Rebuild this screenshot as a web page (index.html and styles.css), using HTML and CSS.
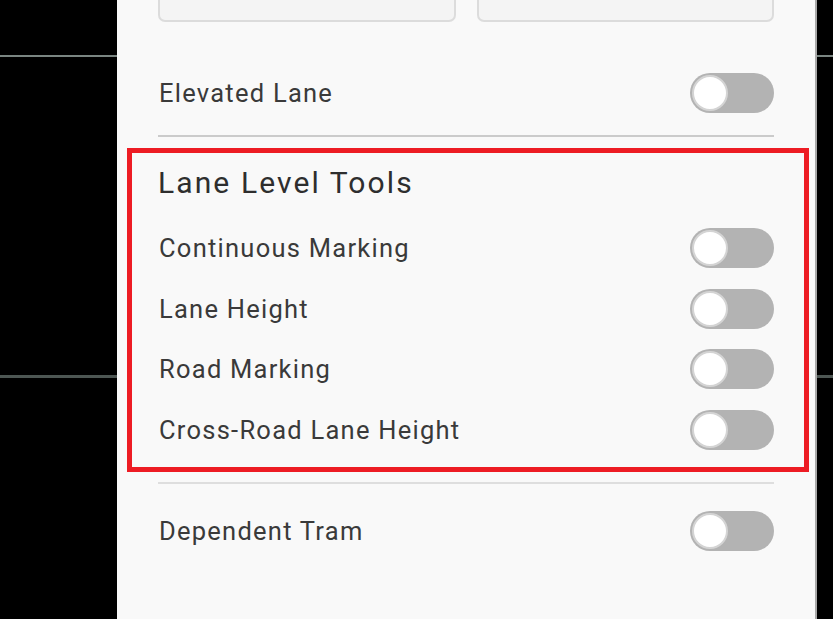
FILE: index.html
```html
<!DOCTYPE html>
<html lang="en">
<head>
<meta charset="utf-8">
<title>Lane Level Tools</title>
<link rel="stylesheet" href="styles.css">
</head>
<body>
<div class="screen">
  <div class="side side-left">
    <div class="grid-line line-top"></div>
    <div class="grid-line line-bottom"></div>
  </div>
  <div class="panel">
    <div class="input-row">
      <div class="input-box"></div>
      <div class="input-box"></div>
    </div>
    <div class="row row-elevated">
      <span class="label">Elevated Lane</span>
      <span class="toggle"><span class="knob"></span></span>
    </div>
    <div class="divider divider-top"></div>
    <section class="tools">
      <h2 class="tools-title">Lane Level Tools</h2>
      <div class="tools-list">
        <div class="row">
          <span class="label">Continuous Marking</span>
          <span class="toggle"><span class="knob"></span></span>
        </div>
        <div class="row">
          <span class="label">Lane Height</span>
          <span class="toggle"><span class="knob"></span></span>
        </div>
        <div class="row">
          <span class="label">Road Marking</span>
          <span class="toggle"><span class="knob"></span></span>
        </div>
        <div class="row">
          <span class="label">Cross-Road Lane Height</span>
          <span class="toggle"><span class="knob"></span></span>
        </div>
      </div>
    </section>
    <div class="divider divider-bottom"></div>
    <div class="row row-tram">
      <span class="label">Dependent Tram</span>
      <span class="toggle"><span class="knob"></span></span>
    </div>
  </div>
  <div class="side side-right">
    <div class="grid-line line-top"></div>
    <div class="grid-line line-bottom"></div>
  </div>
</div>
</body>
</html>
```

FILE: styles.css
```css
* {
  box-sizing: border-box;
}

html, body {
  margin: 0;
  padding: 0;
  background: #000;
}

body {
  width: 833px;
  height: 619px;
  overflow: hidden;
  font-family: Roboto, "Liberation Sans", sans-serif;
}

.screen {
  display: flex;
  width: 833px;
  height: 619px;
}

.side {
  background: #000;
  padding-top: 55px;
}

.side-left {
  width: 117px;
}

.side-right {
  width: 16px;
}

.grid-line {
  width: 100%;
}

.line-top {
  height: 2px;
  background: #7a8581;
}

.line-bottom {
  height: 3px;
  margin-top: 318px;
  background: #4d5653;
}

.panel {
  width: 700px;
  height: 619px;
  background: #f9f9f9;
  border-right: 2px solid #a9a9a9;
  padding: 0 41px;
}

.input-row {
  display: flex;
  gap: 21px;
  margin-top: -20px;
}

.input-box {
  flex: 1;
  height: 42px;
  background: #f4f4f4;
  border: 2px solid #dcdcdc;
  border-radius: 7px;
}

.row {
  display: flex;
  align-items: center;
  justify-content: space-between;
  height: 40px;
}

.row-elevated {
  margin-top: 51px;
}

.label {
  font-size: 25.5px;
  letter-spacing: 1.25px;
  color: #3a3a3a;
  padding-left: 1px;
}

.toggle {
  display: flex;
  align-items: center;
  width: 84px;
  height: 40px;
  padding: 2px;
  border-radius: 20px;
  background: #b3b3b3;
}

.knob {
  width: 36px;
  height: 36px;
  border-radius: 50%;
  background: #fff;
  border: 2px solid #d4d4d4;
}

.divider {
  height: 2px;
}

.divider-top {
  margin-top: 22px;
  background: #cbcbcb;
}

.tools {
  margin: 11px -35px 0 -31px;
  border: 5px solid #ed1c24;
  padding: 12px 30px 17px 26px;
}

.tools-title {
  margin: 0;
  height: 36px;
  line-height: 36px;
  font-size: 30px;
  font-weight: 400;
  letter-spacing: 2.1px;
  color: #2e2e2e;
}

.tools-list {
  display: flex;
  flex-direction: column;
  gap: 20.5px;
  margin-top: 27px;
}

.divider-bottom {
  margin-top: 10px;
  background: #dedede;
}

.row-tram {
  margin-top: 27px;
}
```
